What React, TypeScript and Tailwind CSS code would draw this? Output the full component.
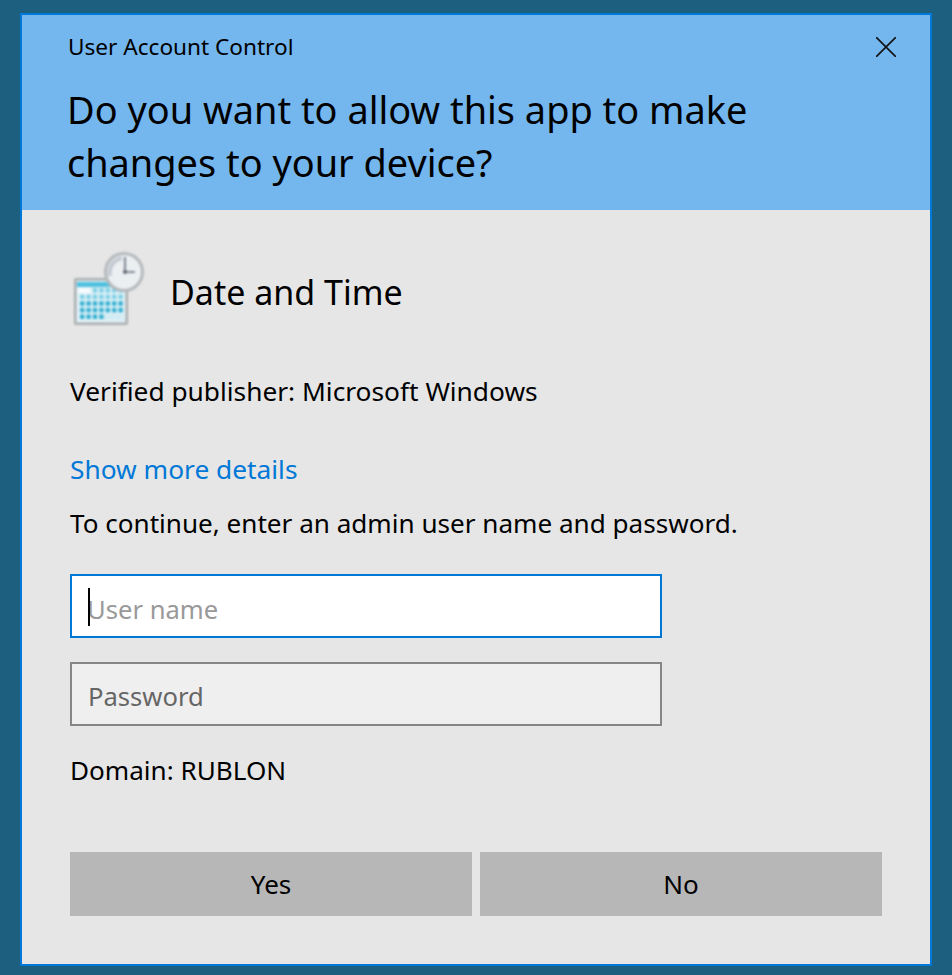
import React from 'react';

function DateTimeIcon() {
  const cells: React.ReactElement[] = [];
  for (let r = 0; r < 5; r++) {
    for (let c = 0; c < 7; c++) {
      if (r === 0 && c < 2) continue;
      if (r === 4 && c > 3) continue;
      cells.push(
        <rect key={`${r}-${c}`} x={80 + c * 6.4} y={288 + r * 6.6} width="4.4" height="4.6" fill={r < 2 ? '#7fd0e6' : '#35b0d2'} />
      );
    }
  }
  return (
    <svg width="80" height="80" viewBox="70 250 80 80" className="shrink-0" style={{ filter: 'blur(0.9px)' }}>
      <rect x="74" y="278" width="54" height="47" rx="2" fill="#a9adaf" />
      <rect x="76.5" y="280.5" width="49" height="42" fill="#e2f2f7" />
      <rect x="77" y="282" width="48" height="5" fill="#4fc0de" />
      {cells}
      <rect x="78" y="288" width="12" height="5" fill="#f6fbfd" />
      <rect x="104" y="314" width="20" height="6" fill="#d4ecf4" />
      <circle cx="124" cy="272" r="20" fill="#b4b8bb" />
      <circle cx="124" cy="272" r="17" fill="#eceff2" />
      <path d="M110 276a15 15 0 0 1 12-18" stroke="#c3cad2" strokeWidth="4" fill="none" />
      <path d="M125 257v15h10" stroke="#5f6a75" strokeWidth="1.6" fill="none" />
      <circle cx="125" cy="272" r="2" fill="#5c6670" />
    </svg>
  );
}

export default function App() {
  return (
    <div className="h-[975px] overflow-hidden bg-[#1c5f7e] pt-[13px] pl-[20px] font-['Noto_Sans',sans-serif] text-black">
      <div className="w-[912px] h-[953px] border-2 border-[#0078d7] bg-[#e6e6e6] flex flex-col">
        <div className="h-[195px] shrink-0 bg-[#74b6ee] pl-[46px] pr-[26px] flex flex-col">
          <div className="flex items-center justify-between h-[64px]">
            <span className="text-[22.6px] leading-none">User Account Control</span>
            <button className="w-[22px] h-[22px] mr-[7px] flex items-center justify-center">
              <svg width="20" height="20" viewBox="0 0 20 20" stroke="#111" strokeWidth="1.6" fill="none">
                <path d="M0 0L20 20M20 0L0 20" />
              </svg>
            </button>
          </div>
          <h1 className="mt-[4px] -ml-[1px] text-[37.9px] leading-[53px] font-normal whitespace-nowrap">
            Do you want to allow this app to make<br />changes to your device?
          </h1>
        </div>

        <div className="flex-1 pl-[48px] pr-[48px] flex flex-col">
          <div className="flex items-center gap-[20px] mt-[40px] h-[80px]">
            <DateTimeIcon />
            <span className="text-[34px] leading-none mt-[4px]">Date and Time</span>
          </div>
          <p className="mt-[43px] text-[26.3px] leading-[36px]">Verified publisher: Microsoft Windows</p>
          <a className="mt-[42px] text-[26.3px] leading-[36px] text-[#0078d7]">Show more details</a>
          <p className="mt-[18px] text-[26.1px] leading-[36px]">To continue, enter an admin user name and password.</p>

          <div className="relative mt-[33px] w-[592px] h-[64px] border-2 border-[#0078d7] bg-white flex items-center pl-[15px] pt-[8px] text-[25.6px] text-[#999999]">
            User name
            <div className="absolute left-[16px] top-[12px] w-[2px] h-[38px] bg-black" />
          </div>
          <div className="mt-[24px] w-[592px] h-[64px] border-2 border-[#868686] bg-[#efefef] flex items-center pl-[16px] pt-[6px] text-[25.6px] text-[#666666]">
            Password
          </div>
          <p className="mt-[26px] text-[26.1px] leading-[36px]">Domain: RUBLON</p>

          <div className="mt-[64px] flex gap-[8px]">
            <button className="w-[402px] h-[64px] bg-[#b7b7b7] text-[26px]">Yes</button>
            <button className="w-[402px] h-[64px] bg-[#b7b7b7] text-[26px]">No</button>
          </div>
        </div>
      </div>
    </div>
  );
}
